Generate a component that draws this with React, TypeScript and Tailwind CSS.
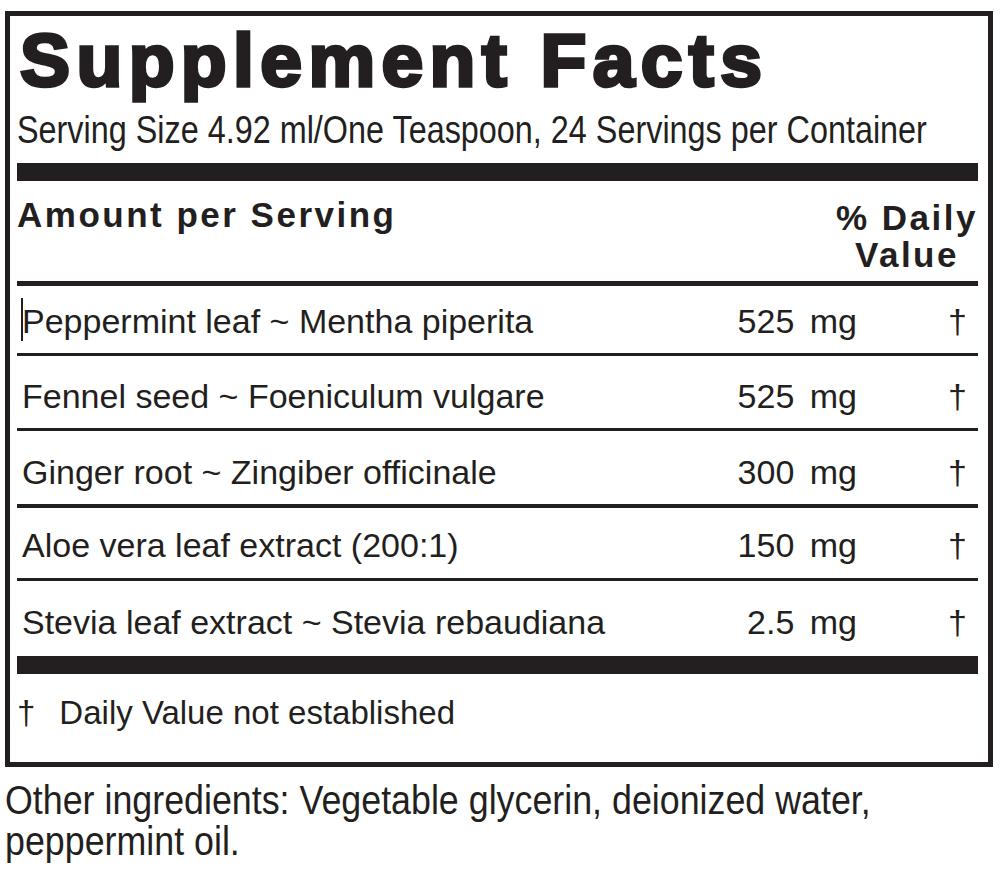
import React from 'react';

const rows = [
  { name: 'Peppermint leaf ~ Mentha piperita', amount: '525', row: 'h-[70px] pt-[15px] border-b-[3px]', cursor: true },
  { name: 'Fennel seed ~ Foeniculum vulgare', amount: '525', row: 'h-[75px] pt-[20px] border-b-[3px]', cursor: false },
  { name: 'Ginger root ~ Zingiber officinale', amount: '300', row: 'h-[77px] pt-[21px] border-b-[4px]', cursor: false },
  { name: 'Aloe vera leaf extract (200:1)', amount: '150', row: 'h-[73px] pt-[17px] border-b-[3px]', cursor: false },
  { name: 'Stevia leaf extract ~ Stevia rebaudiana', amount: '2.5', row: 'h-[75px] pt-[21px]', cursor: false },
];

const sans = "font-['Liberation_Sans',Arial,sans-serif]";
// condensed look: Arial Narrow is Arial squeezed horizontally
const squeeze = 'block w-fit origin-left whitespace-nowrap';

const App = () => {
  return (
    <div className={`${sans} min-h-[873px] bg-white pt-[11px] pl-[5px] text-[#231f20]`}>
      <div className="w-[988px] border-[5px] border-[#231f20] pt-[7px] pl-[7px] pr-[10px]">
        <h1 className="pl-[3px] text-[75px] font-bold leading-[75px] tracking-[6.4px] [-webkit-text-stroke:3.5px_#231f20]">
          Supplement Facts
        </h1>
        <div className="mt-[12px] text-[39px] leading-[40px]">
          <span className={`${squeeze} scale-x-[0.83]`}>
            Serving Size 4.92 ml/One Teaspoon, 24 Servings per Container
          </span>
        </div>
        <div className="mt-[13px] h-[18px] bg-[#231f20]" />

        <div className="mt-[16px] flex items-start justify-between text-[35px] font-bold tracking-[2.5px]">
          <span className="leading-[36px]">Amount per Serving</span>
          <span className="pt-[2px] text-center leading-[37px]">
            % Daily
            <br />
            Value
          </span>
        </div>
        <div className="mt-[8px] h-[5px] bg-[#231f20]" />

        {rows.map((r) => (
          <div
            key={r.name}
            className={`${r.row} flex items-start border-[#231f20] pl-[5px] text-[34px] leading-[40px]`}
          >
            <span className="relative flex-1">
              {r.cursor && (
                <span className="absolute left-[-1px] top-[-3px] h-[43px] w-[2px] bg-[#231f20]" />
              )}
              {r.name}
            </span>
            <span className="w-[200px] text-right">
              {r.amount} <span className="ml-[6px]">mg</span>
            </span>
            <span className="w-[121px] pr-[11px] text-right">†</span>
          </div>
        ))}

        <div className="h-[18px] bg-[#231f20]" />
        <p className="mt-[19px] pb-[29px] text-[33px] leading-[40px]">
          †<span className="ml-[24px]">Daily Value not established</span>
        </p>
      </div>
      <div className="mt-[13px] text-[40px] leading-[41px]">
        <span className={`${squeeze} scale-x-[0.895]`}>
          Other ingredients: Vegetable glycerin, deionized water,
        </span>
        <span className={`${squeeze} scale-x-[0.895]`}>peppermint oil.</span>
      </div>
    </div>
  );
};

export default App;
